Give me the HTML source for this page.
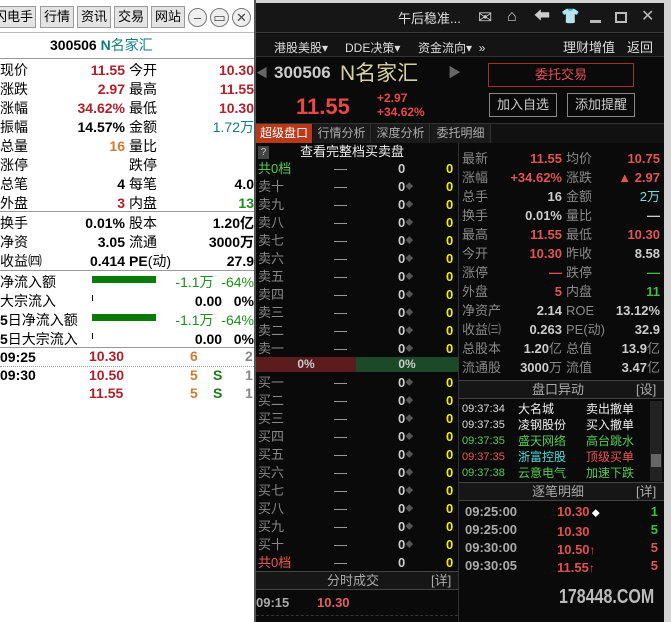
<!DOCTYPE html>
<html><head><meta charset="utf-8"><style>
*{margin:0;padding:0;box-sizing:border-box}
body{width:671px;height:622px;overflow:hidden;background:#d4d4d4;position:relative;font-family:"Liberation Sans","Noto Sans CJK SC",sans-serif;font-size:14px}
.a{position:absolute;white-space:nowrap;line-height:16px}
.r{text-align:right}
.b{font-weight:bold}
#L{position:absolute;left:0;top:0;width:256px;height:622px;background:#fff;overflow:hidden}
#D{position:absolute;left:256px;top:3px;width:408px;height:619px;background:#0a0a0a}
.btn{position:absolute;top:6px;height:22px;background:#e4e4e4;border:1px solid #9a9a9a;font-size:13px;line-height:20px;text-align:center;color:#000;white-space:nowrap;overflow:hidden}
.circ{position:absolute;top:8px;width:19px;height:19px;border-radius:50%;border:1px solid #777;background:#eee;text-align:center;line-height:17px;font-size:13px;color:#444}
.hl{position:absolute;height:1px;background:#999;left:0;width:254px}
.g{color:#888}.w{color:#ddd}.red{color:#e25454}.grn{color:#3fbf3f}.y{color:#ff0}
.d{font-size:13px}
.dm{color:#555;font-size:8px;vertical-align:2px}
</style></head><body>
<div id="L">
<div class="btn" style="left:-8px;width:44px;text-align:right;padding-right:2px">闪电手</div>
<div class="btn" style="left:40px;width:34px">行情</div>
<div class="btn" style="left:77px;width:34px">资讯</div>
<div class="btn" style="left:114px;width:34px">交易</div>
<div class="btn" style="left:151px;width:34px">网站</div>
<div class="circ" style="left:188px">–</div>
<div class="circ" style="left:210px">▭</div>
<div class="circ" style="left:232px">✕</div>
<div style="position:absolute;left:0;top:32px;width:256px;height:1px;background:#bbb"></div>
<div class="a b" style="left:50px;top:37px;font-size:14px">300506 <span style="color:#0a7f7f">N</span><span style="color:#0a7f7f;font-weight:normal">名家汇</span></div>
<div class="hl" style="top:58px"></div>
<div style="position:absolute;left:0;top:61px;width:256px;font-size:14px;line-height:19px">
<div class="a" style="left:0;top:0;line-height:19px">现价<br>涨跌<br>涨幅<br>振幅<br>总量<br>涨停<br>总笔<br>外盘</div>
<div class="a r b" style="right:131px;top:0;line-height:19px"><span style="color:#b0202a">11.55</span><br><span style="color:#b0202a">2.97</span><br><span style="color:#b0202a">34.62%</span><br>14.57%<br><span style="color:#d07a30">16</span><br>&nbsp;<br>4<br><span style="color:#b0202a">3</span></div>
<div class="a" style="left:129px;top:0;line-height:19px">今开<br>最高<br>最低<br>金额<br>量比<br>跌停<br>每笔<br>内盘</div>
<div class="a r b" style="right:2px;top:0;line-height:19px"><span style="color:#b0202a">10.30</span><br><span style="color:#b0202a">11.55</span><br><span style="color:#b0202a">10.30</span><br><span style="color:#0a7f7f;font-weight:normal">1.72万</span><br>&nbsp;<br>&nbsp;<br>4.0<br><span style="color:#1a8f1a">13</span></div>
</div>
<div class="hl" style="top:211px"></div>
<div style="position:absolute;left:0;top:214px;width:256px">
<div class="a" style="left:0;top:0;line-height:19px">换手<br>净资<br>收益㈣</div>
<div class="a r b" style="right:131px;top:0;line-height:19px">0.01%<br>3.05<br>0.414</div>
<div class="a" style="left:129px;top:0;line-height:19px">股本<br>流通<br><b>PE</b>(动)</div>
<div class="a r b" style="right:2px;top:0;line-height:19px">1.20亿<br>3000万<br>27.9</div>
</div>
<div class="hl" style="top:270px"></div>
<div class="a" style="left:0;top:273px;line-height:19px">净流入额<br>大宗流入<br><b>5</b>日净流入额<br><b>5</b>日大宗流入</div>
<div style="position:absolute;left:92px;top:276px;width:64px;height:7px;background:#0a7a0a"></div>
<div style="position:absolute;left:92px;top:314px;width:64px;height:7px;background:#0a7a0a"></div>
<div style="position:absolute;left:92px;top:295px;width:1px;height:6px;background:#000"></div>
<div style="position:absolute;left:92px;top:333px;width:1px;height:6px;background:#000"></div>
<div class="a r" style="right:2px;top:273px;line-height:19px"><span style="color:#1a8f1a">-1.1万 &nbsp;-64%</span><br><b>0.00 &nbsp;&nbsp;0%</b><br><span style="color:#1a8f1a">-1.1万 &nbsp;-64%</span><br><b>0.00 &nbsp;&nbsp;0%</b></div>
<div class="hl" style="top:347px"></div>
<div class="a b" style="left:0;top:348px;line-height:18px">09:25</div>
<div class="a b" style="left:89px;top:348px;color:#b0202a">10.30</div>
<div class="a b" style="left:190px;top:348px;color:#d07a30">6</div>
<div class="a b" style="left:245px;top:348px;color:#888">2</div>
<div style="position:absolute;left:0;top:366px;width:254px;border-top:1px dotted #999"></div>
<div class="a b" style="left:0;top:367px">09:30</div>
<div class="a b" style="left:89px;top:367px;color:#b0202a">10.50</div>
<div class="a b" style="left:190px;top:367px;color:#d07a30">5</div>
<div class="a b" style="left:213px;top:367px;color:#1a7a1a">S</div>
<div class="a b" style="left:245px;top:367px;color:#888">1</div>
<div class="a b" style="left:89px;top:385px;color:#b0202a">11.55</div>
<div class="a b" style="left:190px;top:385px;color:#d07a30">5</div>
<div class="a b" style="left:213px;top:385px;color:#1a7a1a">S</div>
<div class="a b" style="left:245px;top:385px;color:#888">1</div>
</div>
<div style="position:absolute;left:254px;top:0;width:2px;height:622px;background:#555"></div>

<div id="D">
<div style="position:absolute;left:0;top:0;width:408px;height:30px;background:#161616;border-bottom:1px solid #3a3a3a"></div>
<div class="a" style="left:142px;top:8px;color:#ddd;font-size:13px">午后稳准...</div>
<div class="a" style="left:222px;top:7px;color:#ccc;font-size:17px">✉</div>
<div class="a" style="left:251px;top:6px;color:#ccc;font-size:16px">⌂</div>
<div class="a" style="left:278px;top:6px;color:#ccc;font-size:16px">⬅</div>
<div class="a" style="left:305px;top:6px;color:#ccc;font-size:15px">👕</div>
<div style="position:absolute;left:334px;top:17px;width:11px;height:3px;background:#bbb"></div>
<div style="position:absolute;left:359px;top:9px;width:12px;height:11px;border:2px solid #bbb"></div>
<div class="a" style="left:385px;top:6px;color:#bbb;font-size:16px">✕</div>
<div style="position:absolute;left:0;top:31px;width:408px;height:23px;background:#141414;border-bottom:1px solid #333"></div>
<div class="a" style="left:18px;top:37px;color:#ddd;font-size:12px">港股美股▾</div>
<div class="a" style="left:89px;top:37px;color:#ddd;font-size:12px">DDE决策▾</div>
<div class="a" style="left:162px;top:37px;color:#ddd;font-size:12px">资金流向▾ &nbsp;»</div>
<div class="a" style="left:307px;top:37px;color:#ddd;font-size:13px">理财增值</div>
<div class="a" style="left:371px;top:37px;color:#ddd;font-size:13px">返回</div>
<div class="a" style="left:0;top:62px;color:#666;font-size:12px">◀</div>
<div class="a b" style="left:18px;top:62px;color:#ccc;font-size:17px">300506</div>
<div class="a" style="left:84px;top:59px;color:#d8d2a0;font-size:21px;line-height:24px">N名家汇</div>
<div class="a" style="left:192px;top:62px;color:#666;font-size:13px">▶</div>
<div style="position:absolute;left:232px;top:60px;width:146px;height:24px;border:1px solid #a03030;color:#e05050;font-size:13px;text-align:center;line-height:22px">委托交易</div>
<div style="position:absolute;left:233px;top:90px;width:68px;height:24px;border:1px solid #888;color:#ccc;font-size:13px;text-align:center;line-height:22px">加入自选</div>
<div style="position:absolute;left:311px;top:90px;width:68px;height:24px;border:1px solid #888;color:#ccc;font-size:13px;text-align:center;line-height:22px">添加提醒</div>
<div class="a b" style="left:40px;top:92px;color:#e84848;font-size:22px;line-height:24px">11.55</div>
<div class="a b" style="left:121px;top:88px;color:#e84848;font-size:12px;line-height:14px">+2.97<br>+34.62%</div>
<div style="position:absolute;left:0;top:120px;width:408px;height:20px;background:#111;border-top:1px solid #333"></div>
<div style="position:absolute;left:0;top:121px;width:56px;height:19px;background:#b83a1a;color:#fff;font-size:12px;line-height:19px;text-align:center">超级盘口</div>
<div style="position:absolute;left:57px;top:121px;width:58px;height:19px;background:#1a1a1a;color:#aaa;font-size:12px;line-height:19px;text-align:center;border-right:1px solid #333">行情分析</div>
<div style="position:absolute;left:116px;top:121px;width:58px;height:19px;background:#1a1a1a;color:#aaa;font-size:12px;line-height:19px;text-align:center;border-right:1px solid #333">深度分析</div>
<div style="position:absolute;left:175px;top:121px;width:60px;height:19px;background:#1a1a1a;color:#aaa;font-size:12px;line-height:19px;text-align:center;border-right:1px solid #333">委托明细</div>
<div style="position:absolute;left:202px;top:140px;width:1px;height:479px;background:#333"></div>
<div style="position:absolute;left:2px;top:143px;width:11px;height:13px;background:#444;color:#ccc;font-size:10px;line-height:13px;text-align:center">?</div>
<div class="a" style="left:44px;top:141px;color:#eee;font-size:13px">查看完整档买卖盘</div>
<div class="a d" style="left:2px;top:157px;line-height:18px;color:#888">
<span style="color:#5c5">共0档</span><br>卖十<br>卖九<br>卖八<br>卖七<br>卖六<br>卖五<br>卖四<br>卖三<br>卖二<br>卖一</div>
<div class="a d" style="left:78px;top:157px;line-height:18px;color:#aaa">—<br>—<br>—<br>—<br>—<br>—<br>—<br>—<br>—<br>—<br>—</div>
<div class="a d b" style="left:142px;top:157px;line-height:18px;color:#ccc">0<br>0<span class="dm">◆</span><br>0<span class="dm">◆</span><br>0<span class="dm">◆</span><br>0<span class="dm">◆</span><br>0<span class="dm">◆</span><br>0<span class="dm">◆</span><br>0<span class="dm">◆</span><br>0<span class="dm">◆</span><br>0<span class="dm">◆</span><br>0<span class="dm">◆</span></div>
<div class="a d b" style="left:190px;top:157px;line-height:18px;color:#ee0">0<br>0<br>0<br>0<br>0<br>0<br>0<br>0<br>0<br>0<br>0</div>
<div style="position:absolute;left:0;top:354px;width:100px;height:15px;background:#5a1c1c;color:#ccc;font-size:12px;font-weight:bold;text-align:center;line-height:15px">0%</div>
<div style="position:absolute;left:100px;top:354px;width:102px;height:15px;background:#1c4a28;color:#ccc;font-size:12px;font-weight:bold;text-align:center;line-height:15px">0%</div>
<div class="a d" style="left:2px;top:371px;line-height:18px;color:#888">买一<br>买二<br>买三<br>买四<br>买五<br>买六<br>买七<br>买八<br>买九<br>买十<br><span style="color:#e55">共0档</span></div>
<div class="a d" style="left:78px;top:371px;line-height:18px;color:#aaa">—<br>—<br>—<br>—<br>—<br>—<br>—<br>—<br>—<br>—<br>—</div>
<div class="a d b" style="left:142px;top:371px;line-height:18px;color:#ccc">0<span class="dm">◆</span><br>0<span class="dm">◆</span><br>0<span class="dm">◆</span><br>0<span class="dm">◆</span><br>0<span class="dm">◆</span><br>0<span class="dm">◆</span><br>0<span class="dm">◆</span><br>0<span class="dm">◆</span><br>0<span class="dm">◆</span><br>0<span class="dm">◆</span><br>0</div>
<div class="a d b" style="left:190px;top:371px;line-height:18px;color:#ee0">0<br>0<br>0<br>0<br>0<br>0<br>0<br>0<br>0<br>0<br>0</div>
<div style="position:absolute;left:0;top:568px;width:202px;height:19px;background:#161616;border-top:1px solid #444;border-bottom:1px solid #444"></div>
<div class="a" style="left:71px;top:570px;color:#aaa;font-size:13px">分时成交</div>
<div class="a" style="left:175px;top:570px;color:#aaa;font-size:13px">[详]</div>
<div class="a b" style="left:0;top:592px;color:#aaa;font-size:13px">09:15</div>
<div class="a b" style="left:61px;top:592px;color:#e06060;font-size:13px">10.30</div>
<div style="position:absolute;left:0;top:612px;width:202px;border-top:1px dashed #333"></div>

<div class="a" style="left:206px;top:146px;line-height:19px;color:#888;font-size:13px">最新<br>涨幅<br>总手<br>换手<br>最高<br>今开<br>涨停<br>外盘<br>净资产<br>收益㈢<br>总股本<br>流通股</div>
<div class="a r b" style="right:102px;top:146px;line-height:19px;color:#ccc;font-size:13px"><span class="red">11.55</span><br><span class="red">+34.62%</span><br>16<br>0.01%<br><span class="red">11.55</span><br><span class="red">10.30</span><br><span class="red">—</span><br><span class="red">5</span><br>2.14<br>0.263<br>1.20<span style="font-weight:normal;color:#888">亿</span><br>3000<span style="font-weight:normal;color:#888">万</span></div>
<div class="a" style="left:310px;top:146px;line-height:19px;color:#888;font-size:13px">均价<br>涨跌<br>金额<br>量比<br>最低<br>昨收<br>跌停<br>内盘<br>ROE<br>PE(动)<br>总值<br>流值</div>
<div class="a r b" style="right:4px;top:146px;line-height:19px;color:#ccc;font-size:13px"><span class="red">10.75</span><br><span class="red">▲ 2.97</span><br><span style="color:#7dd;font-weight:normal">2万</span><br>—<br><span class="red">10.30</span><br>8.58<br><span class="grn">—</span><br><span class="grn">11</span><br>13.12%<br>32.9<br>13.9<span style="font-weight:normal;color:#888">亿</span><br>3.47<span style="font-weight:normal;color:#888">亿</span></div>
<div style="position:absolute;left:203px;top:377px;width:205px;height:19px;background:#161616;border-top:1px solid #444;border-bottom:1px solid #444"></div>
<div class="a" style="left:276px;top:379px;color:#aaa;font-size:13px">盘口异动</div>
<div class="a" style="left:380px;top:379px;color:#aaa;font-size:13px">[设]</div>
<div class="a" style="left:206px;top:398px;line-height:16px;font-size:11px;color:#ddd">09:37:34<br>09:37:35<br><span style="color:#5c5">09:37:35</span><br><span style="color:#e55">09:37:35</span><br><span style="color:#5c5">09:37:38</span></div>
<div class="a" style="left:262px;top:398px;line-height:16px;font-size:12px;color:#eee">大名城<br>凌钢股份<br><span style="color:#5c5">盛天网络</span><br><span style="color:#5dd">浙富控股</span><br><span style="color:#5c5">云意电气</span></div>
<div class="a" style="left:330px;top:398px;line-height:16px;font-size:12px;color:#eee">卖出撤单<br>买入撤单<br><span style="color:#5c5">高台跳水</span><br><span style="color:#e55">顶级买单</span><br><span style="color:#5c5">加速下跌</span></div>
<div style="position:absolute;left:394px;top:398px;width:12px;height:80px;background:#222"></div>
<div style="position:absolute;left:395px;top:451px;width:10px;height:13px;background:#666"></div>
<div style="position:absolute;left:203px;top:479px;width:205px;height:19px;background:#161616;border-top:1px solid #444;border-bottom:1px solid #444"></div>
<div class="a" style="left:276px;top:481px;color:#aaa;font-size:13px">逐笔明细</div>
<div class="a" style="left:380px;top:481px;color:#aaa;font-size:13px">[详]</div>
<div class="a b" style="left:209px;top:500px;line-height:18px;color:#aaa;font-size:13px">09:25:00<br>09:25:00<br>09:30:00<br>09:30:05</div>
<div class="a b" style="left:301px;top:500px;line-height:18px;color:#e05050;font-size:13px">10.30<span style="color:#fff;font-size:8px"> ◆</span><br>10.30<br>10.50<span style="font-size:12px">↑</span><br>11.55<span style="font-size:12px">↑</span></div>
<div class="a r b" style="right:6px;top:500px;line-height:18px;font-size:13px"><span class="grn">1</span><br><span class="grn">5</span><br><span class="red">5</span><br><span class="red">5</span></div>
<div class="a b" style="left:303px;top:582px;color:#bbb;font-size:20px;line-height:24px;transform:scaleX(0.8);transform-origin:left">178448.COM</div>
</div>
</body></html>
